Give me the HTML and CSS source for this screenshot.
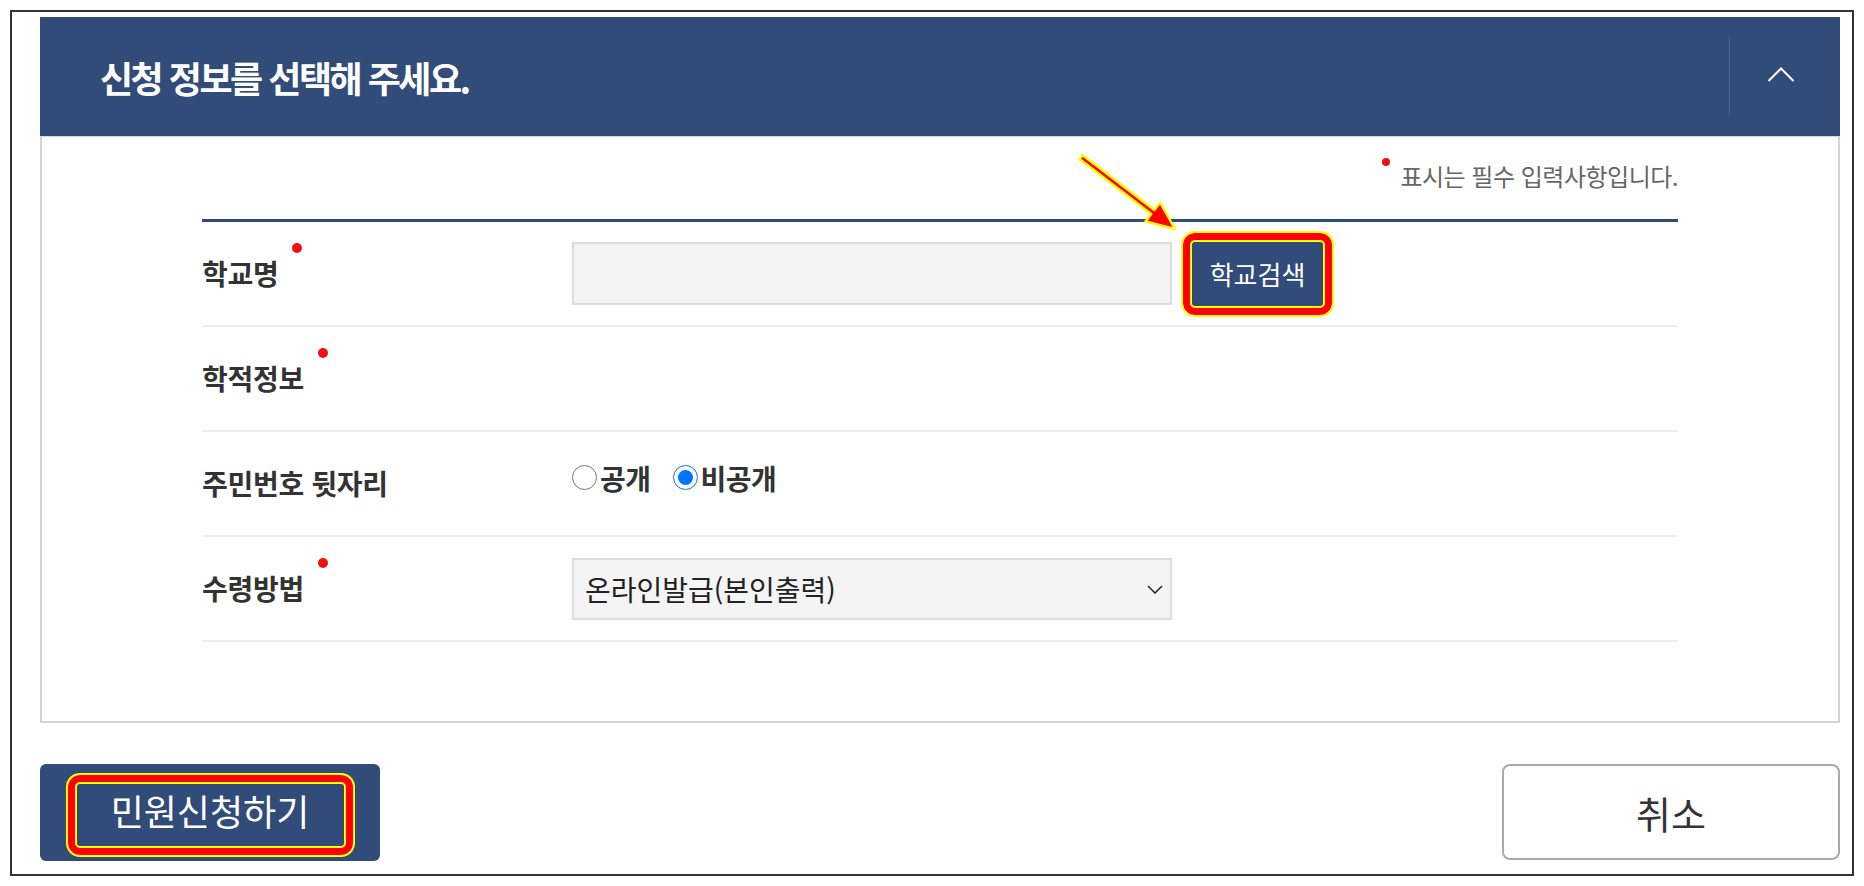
FILE: index.html
```html
<!DOCTYPE html>
<html lang="ko">
<head>
<meta charset="UTF-8">
<title>신청 정보 선택</title>
<link rel="stylesheet" href="styles.css">
</head>
<body>

<div class="frame">

  <div class="panel-head">
    <h2>신청 정보를 선택해 주세요.</h2>
    <button class="fold" type="button">
      <svg width="28" height="16" viewBox="0 0 28 16"><path d="M1.5 15 L14 2.5 L26.5 15" fill="none" stroke="#fff" stroke-width="2"/></svg>
    </button>
  </div>

  <div class="panel-body">
    <p class="note"><span class="dot"></span>표시는 필수 입력사항입니다.</p>

    <div class="form">
      <div class="row">
        <div><span class="label req">학교명</span></div>
        <div class="field">
          <input class="text" type="text">
          <span class="btn-wrap">
            <button class="btn-search" type="button">학교검색</button>
            <span class="mark"></span>
            <svg class="arrow" width="115" height="95" viewBox="0 0 115 95">
              <polygon points="11.5,10 83.3,65 89.1,57.5 104,84 74.5,76.5 80.3,69 8.5,14" fill="#f00" stroke="#ff0" stroke-width="2.5" stroke-linejoin="round"/>
            </svg>
          </span>
        </div>
      </div>

      <div class="row">
        <div><span class="label req">학적정보</span></div>
        <div class="field"></div>
      </div>

      <div class="row">
        <div><span class="label">주민번호 뒷자리</span></div>
        <div class="field">
          <div class="radios">
            <label class="opt"><input type="radio" name="open">공개</label>
            <label class="opt"><input type="radio" name="open" checked>비공개</label>
          </div>
        </div>
      </div>

      <div class="row">
        <div><span class="label req">수령방법</span></div>
        <div class="field">
          <span class="select-wrap">
            <select class="select">
              <option>온라인발급(본인출력)</option>
            </select>
            <svg class="caret" width="16" height="9" viewBox="0 0 16 9"><path d="M1 1 L8 8 L15 1" fill="none" stroke="#222" stroke-width="1.5"/></svg>
          </span>
        </div>
      </div>
    </div>
  </div>

  <div class="actions">
    <button class="btn-apply" type="button">민원신청하기<span class="mark"></span></button>
    <button class="btn-cancel" type="button">취소</button>
  </div>

</div>

</body>
</html>
```

FILE: styles.css
```css
body {
  margin: 0;
  background: #fff;
  color: #333;
  font-family: "Noto Sans CJK KR", "Noto Sans", sans-serif;
}

button, input, select {
  font-family: inherit;
}

.frame {
  margin: 10px;
  height: 866px;
  box-sizing: border-box;
  border: 2px solid #333;
  padding: 5px 12px 0 28px;
}

/* header bar */
.panel-head {
  height: 119px;
  background: #324c79;
  display: flex;
  align-items: center;
  justify-content: space-between;
}

.panel-head h2 {
  margin: 0 0 0 60px;
  color: #fff;
  font-size: 36px;
  font-weight: 700;
  letter-spacing: -2.5px;
}

.fold {
  width: 111px;
  height: 79px;
  border: 0;
  border-left: 1px solid #4a6290;
  background: none;
  display: flex;
  align-items: center;
  justify-content: center;
  padding: 0 8px 6px 0;
}

/* body box */
.panel-body {
  border: 2px solid #d5d5d5;
  border-top-width: 1px;
  padding: 21px 160px 79px;
}

.note {
  margin: 0 0 25px;
  display: flex;
  justify-content: flex-end;
  align-items: center;
  font-size: 24px;
  line-height: 24px;
  color: #666;
  letter-spacing: -0.5px;
}

.note .dot {
  width: 8px;
  height: 8px;
  border-radius: 50%;
  background: #e81010;
  margin: 0 10px 28px 0;
}

.form {
  border-top: 3px solid #324c79;
}

.row {
  display: grid;
  grid-template-columns: 370px 1fr;
  align-items: center;
  height: 103px;
  border-bottom: 2px solid #eee;
}

.label {
  position: relative;
  display: inline-block;
  font-size: 28px;
  font-weight: 700;
  letter-spacing: -0.3px;
  line-height: 1.2;
  color: #333;
}

.req::after {
  content: "";
  position: absolute;
  right: -24px;
  top: -14px;
  width: 10px;
  height: 10px;
  border-radius: 50%;
  background: #f01010;
}

.field {
  display: flex;
  align-items: center;
  gap: 20px;
}

.text {
  width: 600px;
  height: 63px;
  box-sizing: border-box;
  background: #f4f4f4;
  border: 2px solid #ddd;
}

.btn-wrap {
  position: relative;
  display: inline-block;
}

.btn-search {
  display: block;
  width: 131px;
  height: 64px;
  border: 0;
  background: #324c79;
  color: #fff;
  font-size: 26px;
}

/* red/yellow annotation rings */
.mark {
  position: absolute;
  top: -11px;
  left: -11px;
  right: -11px;
  bottom: -11px;
  border: 2px solid #ff0;
  border-radius: 14px;
  box-shadow: inset 0 0 0 7px #f00, inset 0 0 0 9px #ff0;
  pointer-events: none;
}

.arrow {
  position: absolute;
  left: -121px;
  top: -97px;
}

.radios {
  display: flex;
  align-items: center;
  gap: 22px;
  margin-bottom: 12px;
}

.opt {
  display: flex;
  align-items: center;
  font-size: 28px;
  font-weight: 700;
  letter-spacing: -0.5px;
  color: #333;
}

.opt input {
  width: 25px;
  height: 25px;
  margin: 0 3px 0 0;
}

.select-wrap {
  position: relative;
  display: inline-block;
}

.select {
  display: block;
  width: 600px;
  height: 62px;
  box-sizing: border-box;
  appearance: none;
  -webkit-appearance: none;
  background: #f4f4f4;
  border: 2px solid #ddd;
  border-radius: 0;
  padding: 0 40px 0 11px;
  font-size: 28px;
  color: #222;
}

.caret {
  position: absolute;
  right: 9px;
  top: 27px;
  pointer-events: none;
}

/* bottom buttons */
.actions {
  display: flex;
  justify-content: space-between;
  margin-top: 41px;
}

.btn-apply {
  position: relative;
  width: 340px;
  height: 97px;
  border: 0;
  border-radius: 6px;
  background: #324c79;
  color: #fff;
  font-size: 36px;
  padding-bottom: 6px;
}

.btn-apply .mark {
  top: 9px;
  left: 26px;
  right: 25px;
  bottom: 4px;
}

.btn-cancel {
  width: 338px;
  height: 96px;
  border: 2px solid #aaa;
  border-radius: 8px;
  background: #fff;
  color: #333;
  font-size: 38px;
}
```
